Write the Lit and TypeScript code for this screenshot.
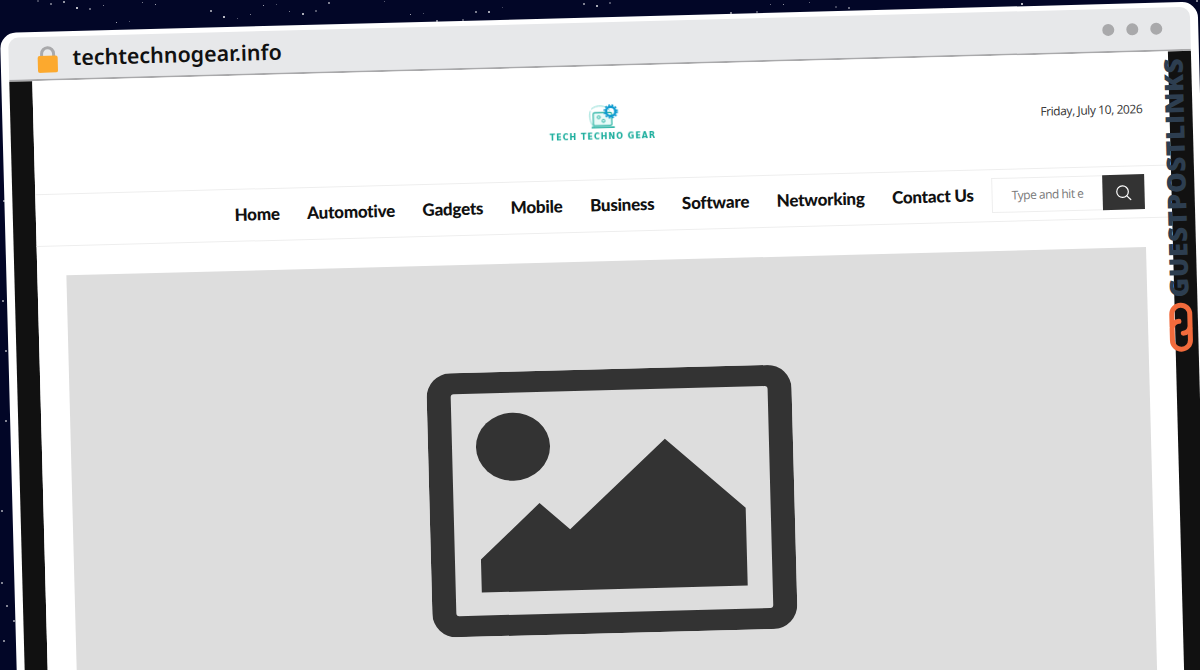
import { LitElement, html, css } from "lit";
import { customElement } from "lit/decorators.js";

const stars = Array.from({ length: 70 }, (_, i) => ({
  x: (i * 173.3 + 37) % 1200,
  y: (i * 7.3 + (i * i * 3) % 13) % 26,
  o: 0.3 + ((i * 37) % 60) / 100,
}));
const sideStars = [[1,582],[6,605],[13,620],[3,640],[2,300],[5,420],[1,510],[3,200],[1196,0],[5,350]];

@customElement("app-root")
export class AppRoot extends LitElement {
  static styles = css`
    :host { display: block; width: 1200px; height: 670px; overflow: hidden; position: relative; background: #020627; font-family: "Open Sans", sans-serif; }
    .star { position: absolute; width: 1.5px; height: 1.5px; border-radius: 50%; background: #fff; }
    .window { position: absolute; left: 0; top: 33px; width: 1198px; height: 700px; transform: rotate(-1.5deg); transform-origin: 0 0; background: #fff; border-radius: 16px 16px 0 0; padding: 5px 8px 0 8px; box-sizing: border-box; display: flex; flex-direction: column; }
    .bar { height: 44px; flex: none; background: #e7e8ea; border-bottom: 2px solid #a9a9ab; border-radius: 10px 10px 0 0; display: flex; align-items: center; box-sizing: border-box; padding: 0 28px; }
    .lock { width: 22px; height: 27px; flex: none; margin-top: 2px; }
    .domain { margin: 0 0 2px 14px; font: 600 21.4px "Noto Sans", sans-serif; color: #111; flex: 1; }
    .dots { display: flex; gap: 12px; }
    .dots i { display: block; width: 12px; height: 12px; border-radius: 50%; background: #a9a9ab; }
    .frame { flex: 1; display: grid; grid-template-columns: 23px 1fr 23px; min-height: 0; }
    .rail { background: #111; }
    .page { background: #fff; min-width: 0; display: flex; flex-direction: column; }
    .top { height: 113px; flex: none; display: grid; grid-template-columns: 1fr auto 1fr; align-items: center; }
    .logo { display: flex; flex-direction: column; align-items: center; filter: blur(0.4px); margin: -1px 0 0 2px; }
    .logo svg { width: 30px; height: 25px; display: block; margin-left: 2px; }
    .logo span { font: 700 8px/9px "DejaVu Sans", sans-serif; color: #19ad9c; letter-spacing: 1px; white-space: nowrap; margin-top: 3px; }
    .date { justify-self: end; font: 12px "Open Sans", sans-serif; letter-spacing: -0.4px; color: #333; margin-right: 27px; }
    .nav { height: 53px; flex: none; border-top: 1px solid #eee; border-bottom: 1px solid #eee; box-sizing: border-box; display: flex; align-items: center; justify-content: flex-end; padding-right: 27px; }
    .links { display: flex; gap: 27.5px; margin: 0 18px 3px 0; }
    .links a { font: 900 17px "Lato", sans-serif; letter-spacing: -0.25px; color: #111; }
    .search { display: flex; height: 35px; }
    .input { width: 111px; box-sizing: border-box; border: 1px solid #eee; border-right: 0; padding-left: 19px; display: flex; align-items: center; font: 12px "Open Sans", sans-serif; letter-spacing: -0.5px; color: #777; overflow: hidden; white-space: nowrap; }
    .btn { width: 42px; background: #333; display: flex; align-items: center; justify-content: center; }
    .btn svg { width: 16px; height: 16px; }
    .hero { margin: 29px 27px 0 29px; background: #ddd; flex: 1; display: flex; justify-content: center; align-items: flex-start; padding-top: 108px; }
    .hero svg { width: 365px; height: 264px; display: block; margin-left: -2px; }
    .brand { position: absolute; left: 1155px; top: 22px; width: 40px; height: 350px; overflow: visible; }
  `;

  render() {
    return html`
      ${stars.map((s) => html`<div class="star" style="left:${s.x}px;top:${s.y}px;opacity:${s.o}"></div>`)}
      ${sideStars.map((s) => html`<div class="star" style="left:${s[0]}px;top:${s[1]}px;opacity:.6"></div>`)}
      <div class="window">
        <div class="bar">
          <svg class="lock" viewBox="0 0 22 27">
            <path d="M5 11V8a6 6 0 0 1 12 0v3" fill="none" stroke="#a9a9ab" stroke-width="3"/>
            <rect x="1" y="10" width="20" height="17" rx="2" fill="#fca92e"/>
          </svg>
          <div class="domain">techtechnogear.info</div>
          <div class="dots"><i></i><i></i><i></i></div>
        </div>
        <div class="frame">
          <div class="rail"></div>
          <div class="page">
            <div class="top">
              <div></div>
              <div class="logo">
                <svg viewBox="0 0 32 27">
                  <path d="M3 5c6-5 16-4 20 2M2 7c-2 6 0 14 4 18" fill="none" stroke="#7fd8d0" stroke-width="1"/>
                  <rect x="5" y="9" width="20" height="14" rx="1.5" fill="#eafaf8" stroke="#19ad9c" stroke-width="1.2"/>
                  <circle cx="11" cy="14" r="1.6" fill="none" stroke="#19ad9c"/>
                  <circle cx="16" cy="18" r="1.6" fill="none" stroke="#19ad9c"/>
                  <path d="M3 25h25" stroke="#19ad9c" stroke-width="1.6"/>
                  <circle cx="24" cy="8" r="5" fill="none" stroke="#0f9bd0" stroke-width="2.6"/>
                  <circle cx="24" cy="8" r="7" fill="none" stroke="#0f9bd0" stroke-width="1.6" stroke-dasharray="2 1.7"/>
                </svg>
                <span>TECH TECHNO GEAR</span>
              </div>
              <div class="date">Friday, July 10, 2026</div>
            </div>
            <div class="nav">
              <div class="links">
                ${["Home","Automotive","Gadgets","Mobile","Business","Software","Networking","Contact Us"].map((l) => html`<a>${l}</a>`)}
              </div>
              <div class="search">
                <div class="input">Type and hit e</div>
                <div class="btn">
                  <svg viewBox="0 0 16 16" fill="none" stroke="#fff" stroke-width="1.2"><circle cx="7" cy="7" r="5.8"/><path d="M11 11 15.5 15.5"/></svg>
                </div>
              </div>
            </div>
            <div class="hero">
              <svg viewBox="0 0 365 264">
                <path fill="#333" fill-rule="evenodd" d="M24 0H341A24 24 0 0 1 365 24V240A24 24 0 0 1 341 264H24A24 24 0 0 1 0 240V24A24 24 0 0 1 24 0ZM27 21A3 3 0 0 0 24 24V240A3 3 0 0 0 27 243H338A3 3 0 0 0 341 240V24A3 3 0 0 0 338 21Z"/>
                <ellipse cx="85" cy="75" rx="37" ry="34" fill="#333"/>
                <polygon points="50,187 110,132 140,159 237,71 316,142 316,220 50,220" fill="#333"/>
              </svg>
            </div>
          </div>
          <div class="rail"></div>
        </div>
        <svg class="brand" viewBox="0 0 40 350">
          <text transform="translate(26.5 273) rotate(-90)" font-family="Open Sans" font-weight="800" font-size="26" letter-spacing="0.7" fill="#2d3e50">GUESTPOSTLINKS</text>
          <g transform="translate(18 303)" fill="none" stroke="#f26b3c" stroke-width="5" stroke-linecap="round">
            <path d="M-9 -1V-13A9 9 0 0 1 9 -13V-1A7 7 0 0 1 2 6"/>
            <path d="M9 1V13A9 9 0 0 1 -9 13V1A7 7 0 0 1 -2 -6"/>
          </g>
        </svg>
      </div>
    `;
  }
}
